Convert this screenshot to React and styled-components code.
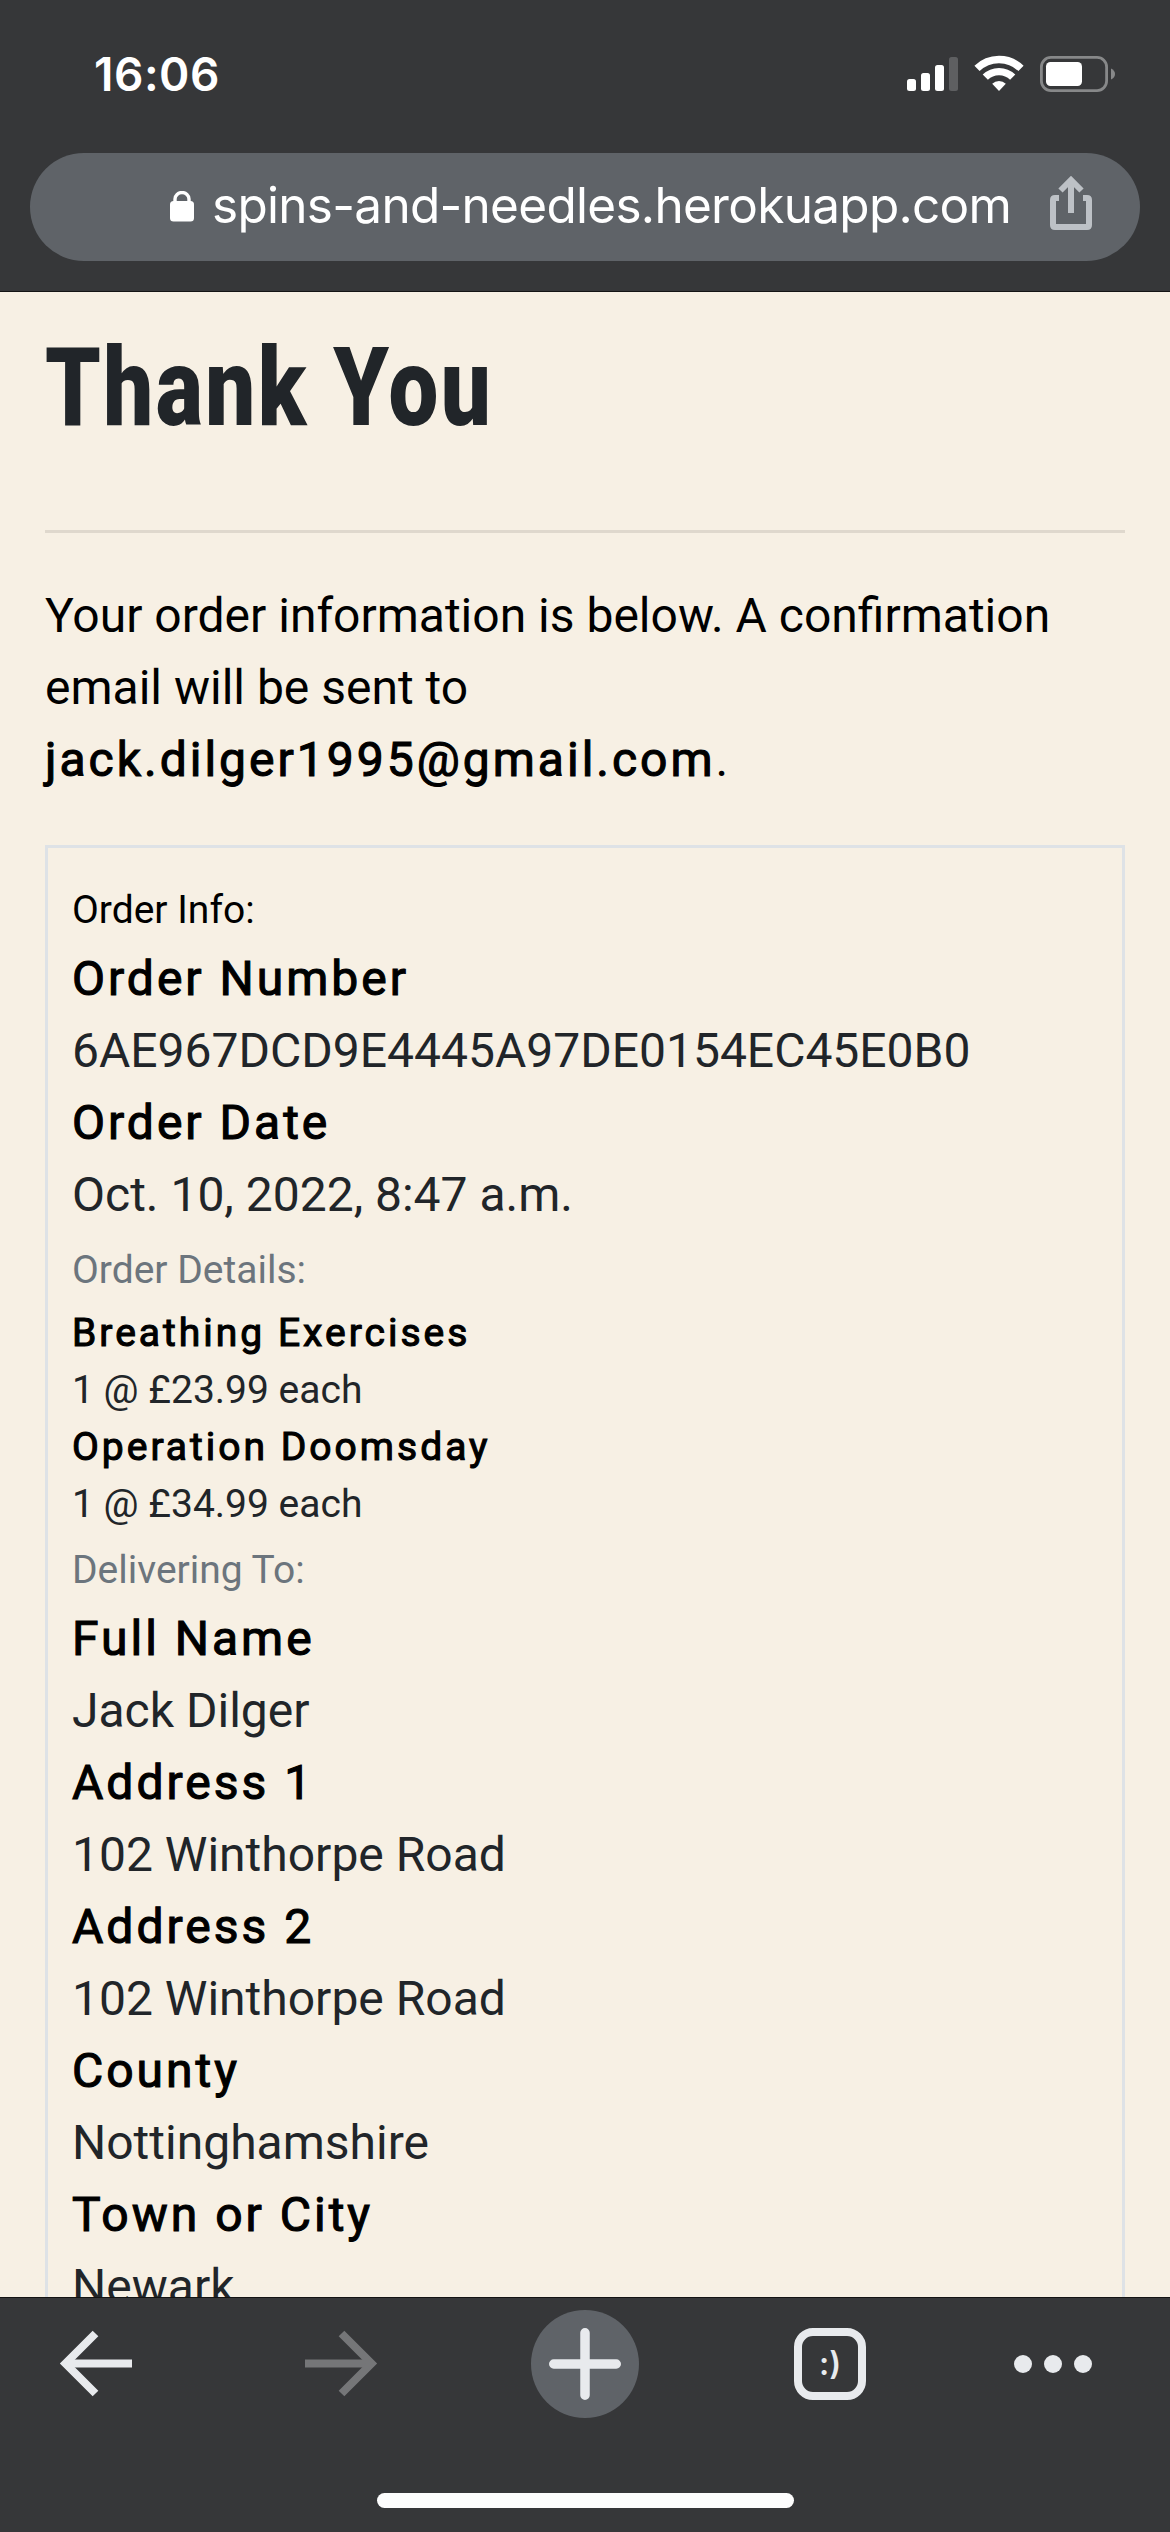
import React from "react";
import styled, { createGlobalStyle } from "styled-components";

const Global = createGlobalStyle`
  * { box-sizing: border-box; }
  html, body { margin: 0; padding: 0; background: #363739; }
  p, h1 { margin: 0; }
`;

const Screen = styled.div`
  width: 1170px;
  height: 2532px;
  display: flex;
  flex-direction: column;
  overflow: hidden;
  background: #363739;
  font-family: Roboto, "Liberation Sans", sans-serif;
`;

const Header = styled.header`
  flex: none;
  height: 292px;
  border-bottom: 1px solid #141414;
  display: flex;
  flex-direction: column;
`;

const StatusBar = styled.div`
  height: 153px;
  padding: 55px 55px 0 94px;
  display: flex;
  justify-content: space-between;
  align-items: flex-start;
`;

const Clock = styled.span`
  font: 600 46px/38px Inter, sans-serif;
  color: #fff;
  letter-spacing: 0.5px;
`;

const StatusIcons = styled.svg`
  display: block;
  width: 208px;
  height: 38px;
`;

const AddressBar = styled.div`
  height: 108px;
  margin: 0 30px;
  padding: 0 48px 0 140px;
  border-radius: 54px;
  background: #5f6368;
  display: flex;
  align-items: center;
`;

const LockIcon = styled.svg`
  flex: none;
  width: 24px;
  height: 32px;
  margin-right: 18px;
`;

const Url = styled.span`
  flex: 1;
  font: 400 49.5px/60px Inter, sans-serif;
  letter-spacing: -0.71px;
  padding-bottom: 4px;
  color: #fff;
  white-space: nowrap;
`;

const ShareIcon = styled.svg`
  flex: none;
  width: 42px;
  height: 54px;
  margin-bottom: 8px;
`;

const Page = styled.main`
  flex: none;
  height: 2005px;
  padding: 0 45px;
  overflow: hidden;
  background: #f7f0e4;
`;

const Title = styled.h1`
  height: 238px;
  padding-top: 32px;
  font-size: 110px;
  line-height: 128px;
  font-weight: 900;
  letter-spacing: 3px;
  color: #212529;
  white-space: nowrap;
  transform: scaleX(0.806);
  transform-origin: 0 0;
`;

const Rule = styled.hr`
  height: 3px;
  margin: 0 0 47px;
  border: 0;
  background: #dfd8cd;
`;

const Intro = styled.p`
  height: 265px;
  font-size: 48px;
  line-height: 72px;
  color: #000;
`;

const Strong = styled.strong`
  font-weight: 400;
  letter-spacing: 3px;
  color: #000;
  -webkit-text-stroke: 1.1px #000;
`;

const Card = styled.section`
  height: 1600px;
  border: 3px solid #dee2e6;
  padding: 23px 24px;
`;

const SectionLabel = styled.p`
  height: ${(p) => p.$height}px;
  padding-top: ${(p) => p.$top}px;
  font-size: 39px;
  line-height: 58px;
  color: ${(p) => (p.$muted ? "#6c757d" : "#000")};
`;

const Line = styled.p`
  font-size: ${(p) => (p.$small ? "39px" : "48px")};
  line-height: ${(p) => (p.$small ? "57px" : "72px")};
  color: #212529;
`;

const BottomBar = styled.nav`
  flex: none;
  height: 235px;
  border-top: 1px solid #141414;
  display: flex;
  flex-direction: column;
  align-items: center;
  justify-content: space-between;
  padding: 12px 0 24px;
`;

const Tools = styled.div`
  width: 1170px;
  height: 108px;
  display: grid;
  grid-template-columns: 192px 298px 190px 300px 146px;
  justify-items: center;
  align-items: center;
`;

const ToolIcon = styled.svg`
  display: block;
  width: 80px;
  height: 72px;
`;

const NewTab = styled.div`
  width: 108px;
  height: 108px;
  border-radius: 50%;
  background: #5f6368;
  display: flex;
  align-items: center;
  justify-content: center;
`;

const TabCount = styled.div`
  width: 72px;
  height: 72px;
  border: 8px solid #e8eaed;
  border-radius: 19px;
  display: flex;
  align-items: center;
  justify-content: center;
  font: 600 32px/40px Inter, sans-serif;
  color: #e8eaed;
`;

const HomeIndicator = styled.div`
  width: 417px;
  height: 15px;
  border-radius: 8px;
  background: #fdfdfd;
`;

const items = [
  ["Breathing Exercises", "1 @ £23.99 each"],
  ["Operation Doomsday", "1 @ £34.99 each"],
];

const orderInfo = [
  ["Order Number", "6AE967DCD9E4445A97DE0154EC45E0B0"],
  ["Order Date", "Oct. 10, 2022, 8:47 a.m."],
];

const delivery = [
  ["Full Name", "Jack Dilger"],
  ["Address 1", "102 Winthorpe Road"],
  ["Address 2", "102 Winthorpe Road"],
  ["County", "Nottinghamshire"],
  ["Town or City", "Newark"],
];

function Pairs({ rows, small }) {
  return rows.map(([label, value]) => (
    <React.Fragment key={label}>
      <Line $small={small}><Strong>{label}</Strong></Line>
      <Line $small={small}>{value}</Line>
    </React.Fragment>
  ));
}

export default function App() {
  return (
    <Screen>
      <Global />
      <Header>
        <StatusBar>
          <Clock>16:06</Clock>
          <StatusIcons viewBox="0 0 208 38" fill="#fff">
            <rect x="0" y="24" width="9" height="12" rx="2.5" />
            <rect x="14" y="18" width="9" height="18" rx="2.5" />
            <rect x="28" y="10" width="9" height="26" rx="2.5" />
            <rect x="42" y="2" width="9" height="34" rx="2.5" fill="#5e5f61" />
            <g fill="none" stroke="#fff" strokeWidth="7.4">
              <path d="M70 13.4 A31.5 31.5 0 0 1 114 13.4" />
              <path d="M78.3 22.2 A19.5 19.5 0 0 1 105.7 22.2" />
            </g>
            <path d="M92 36 L85.2 28.8 A9.8 9.8 0 0 1 98.8 28.8 Z" />
            <rect x="134.4" y="2.4" width="65.2" height="33.2" rx="9.5" fill="none" stroke="#878889" strokeWidth="2.8" />
            <rect x="139" y="7" width="36" height="24" rx="4.5" />
            <path d="M204 13.5 Q208 15.5 208 19 Q208 22.500 204 24.500 Z" fill="#878889" />
          </StatusIcons>
        </StatusBar>
        <AddressBar>
          <LockIcon viewBox="0 0 24 32" fill="#fff">
            <rect x="0" y="10" width="24" height="20.500" rx="3.5" />
            <path d="M5 12 V8 A7 6.500 0 0 1 19 8 V12" fill="none" stroke="#fff" strokeWidth="3.4" />
          </LockIcon>
          <Url>spins-and-needles.herokuapp.com</Url>
          <ShareIcon viewBox="0 0 42 54" fill="none" stroke="#bdc1c6" strokeWidth="6">
            <path d="M21 37 V5" />
            <path d="M10.500 14.500 L21 4 L31.500 14.500" />
            <path d="M9 22 H5 Q3 22 3 24 V49 Q3 51 5 51 H37 Q39 51 39 49 V24 Q39 22 37 22 H33" />
          </ShareIcon>
        </AddressBar>
      </Header>

      <Page>
        <Title>Thank You</Title>
        <Rule />
        <Intro>
          Your order information is below. A confirmation<br />
          email will be sent to<br />
          <Strong>jack.dilger1995@gmail.com</Strong>.
        </Intro>
        <Card>
          <SectionLabel $height={72} $top={10}>Order Info:</SectionLabel>
          <Pairs rows={orderInfo} />
          <SectionLabel $height={74} $top={10} $muted>Order Details:</SectionLabel>
          <Pairs rows={items} small />
          <SectionLabel $height={70} $top={8} $muted>Delivering To:</SectionLabel>
          <Pairs rows={delivery} />
        </Card>
      </Page>

      <BottomBar>
        <Tools>
          <ToolIcon viewBox="0 0 80 72" fill="none" stroke="#e8eaed" strokeWidth="8">
            <path d="M10 35.500 H76" />
            <path d="M39.500 5.500 L9.500 35.500 L39.500 65.500" />
          </ToolIcon>
          <ToolIcon viewBox="0 0 80 72" fill="none" stroke="#757678" strokeWidth="8">
            <path d="M4 35.500 H70" />
            <path d="M40.500 5.500 L70.500 35.500 L40.500 65.500" />
          </ToolIcon>
          <NewTab>
            <ToolIcon viewBox="0 0 80 72" stroke="#e8eaed" strokeWidth="9.5" strokeLinecap="round">
              <path d="M40 4.750 V67.250 M8.750 36 H71.250" />
            </ToolIcon>
          </NewTab>
          <TabCount>:)</TabCount>
          <ToolIcon viewBox="0 0 80 72" fill="#e8eaed">
            <circle cx="10" cy="36" r="9" />
            <circle cx="40" cy="36" r="9" />
            <circle cx="70" cy="36" r="9" />
          </ToolIcon>
        </Tools>
        <HomeIndicator />
      </BottomBar>
    </Screen>
  );
}
